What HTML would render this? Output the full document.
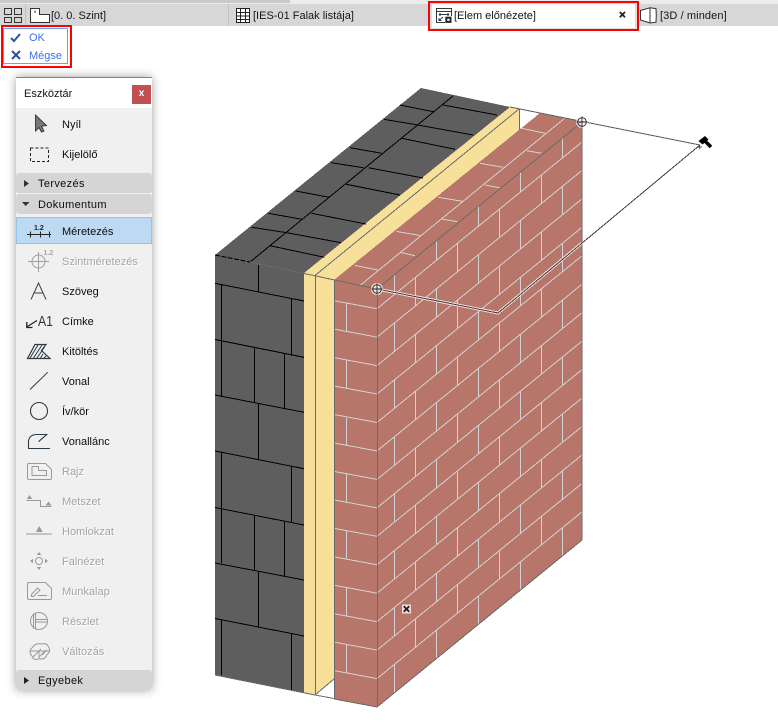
<!DOCTYPE html>
<html><head><meta charset="utf-8"><style>
html,body{margin:0;padding:0;background:#fff}
body{position:relative;width:778px;height:727px;overflow:hidden;font-family:"Liberation Sans",sans-serif;font-size:11px;color:#14141e}
.a{position:absolute;white-space:nowrap;line-height:14px}
.b{position:absolute}
.t{left:62px;color:#0c0c14}
.d{left:62px;color:#a4a4a4;text-shadow:1px 1px 0 #fff}
.h{position:absolute;left:16px;width:136px;height:20px;background:#d5d5d5;border-radius:3px}
.ht{left:38px;letter-spacing:.35px;color:#0c0c14}
svg{position:absolute;left:0;top:0}
</style></head><body>
<div class="b" style="left:0;top:0;width:290px;height:3px;background:#c9c9c9"></div>
<div class="b" style="left:290px;top:0;width:488px;height:3px;background:#ececec"></div>
<div class="b" style="left:0;top:3px;width:778px;height:1px;background:#ececec"></div>
<div class="b" style="left:0;top:4px;width:778px;height:22px;background:#d7d7d7"></div>
<div class="b" style="left:25px;top:4px;width:1px;height:22px;background:#c2c2c2"></div>
<div class="b" style="left:228px;top:4px;width:1px;height:22px;background:#c2c2c2"></div>
<div class="b" style="left:428px;top:1px;width:207px;height:26px;border:2px solid #f00;background:#dedede"></div>
<div class="b" style="left:432px;top:4px;width:203px;height:24px;background:#fff"></div>
<div class="b" style="left:1px;top:25px;width:67px;height:39px;border:2px solid #f00"></div>
<div class="b" style="left:3px;top:28px;width:63px;height:34px;border:1px solid #6f9ff0"></div>
<div class="a" style="left:51px;top:9px">[0. 0. Szint]</div>
<div class="a" style="left:253px;top:9px">[IES-01 Falak listája]</div>
<div class="a" style="left:454px;top:9px">[Elem előnézete]</div>
<div class="a" style="left:660px;top:9px;letter-spacing:.1px">[3D / minden]</div>
<div class="a" style="left:29px;top:31px;color:#3c70f0">OK</div>
<div class="a" style="left:29px;top:49px;color:#3c70f0">Mégse</div>

<div class="b" style="left:16px;top:77px;width:136px;height:613px;background:#f0f0f0;box-shadow:0 0 9px rgba(0,0,0,.38)"></div>
<div class="b" style="left:16px;top:77px;width:136px;height:31px;background:#fff;border-top:1px solid #4a8fd8;box-sizing:border-box"></div>
<div class="a" style="left:24px;top:87px">Eszköztár</div>
<div class="b" style="left:132px;top:85px;width:19px;height:19px;background:#c25050;color:#fff;font-weight:bold;font-size:10px;line-height:18px;text-align:center">x</div>
<div class="h" style="top:173px"></div>
<div class="h" style="top:194px"></div>
<div class="h" style="top:670px"></div>
<div class="b" style="left:16px;top:217px;width:134px;height:25px;background:#bedaf2;border:1px solid #8fc4ef"></div>

<svg width="778" height="727" viewBox="0 0 778 727" fill="none">
<!-- model -->
<g shape-rendering="crispEdges">
<polygon points="215,255 421,88 510,107 304,273 304,693 215,675" fill="#5e5e5e"/>
<polygon points="304,273 510,107 519,109 519,130 334,280 334,679 315,695 304,693" fill="#f6e09a"/>
<polygon points="334,280 540,113 582,122 582,540 377,707 334,699" fill="#b8766b"/>
<g stroke="#000">
<path d="M215 283.3L304 301M215 339.5L304 357.3M215 395L304 412.3M215 451L304 468.7M215 507.5L304 525M215 563L304 580M215 618.5L304 636"/>
<path d="M258.5 265V292M221.5 284.5V341M291.5 298V356M221.5 341V396M254.5 347V403M284.5 354V408M258.5 403V459M221.5 452V508M291.5 467V523M221.5 508V563M254.5 515V570M284.5 522V576M258.5 572V627M221.5 620V675M291.5 634V690"/>
<path d="M250 262L453 96"/>
<path d="M251.7 227.3L286.7 232.7M268.3 213.3L301.7 219.3M295.7 191L329.3 197.3M331 162.7L363.3 167.7M350 147.7L381.7 153.3M384 119.3L418 125M400 105L433.3 111.7"/>
<path d="M270 245.7L324.3 257.3M286.7 232.7L341 242.7M311.7 213.3L366 224M345 184L400 195M368.3 167.7L423 178M401.7 138.3L455 149.3M418 125L473 135M443 105L497 115"/>
<path d="M215 255L250 262" stroke-dasharray="5 1.5"/>
</g>
<g stroke="#d2d2d2">
<path d="M334 300.7L377 308.7M334 329.1L377 337.1M334 357.6L377 365.6M334 386L377 394M334 414.5L377 422.5M334 443L377 451M334 471.4L377 479.4M334 499.9L377 507.9M334 528.3L377 536.3M334 556.8L377 564.8M334 585.2L377 593.2M334 613.7L377 621.7M334 642.1L377 650.1M334 670.6L377 678.6"/>
<path d="M346.5 303.2v28.4M346.5 360.1v28.4M346.5 417v28.4M346.5 473.9v28.4M346.5 530.8v28.4M346.5 587.7v28.4M346.5 644.6v28.4"/>
<path d="M377 308.7L582 142M377 337.15L582 170.45M377 365.6L582 198.9M377 394.05L582 227.35M377 422.5L582 255.8M377 450.95L582 284.25M377 479.4L582 312.7M377 507.85L582 341.15M377 536.3L582 369.6M377 564.75L582 398.05M377 593.2L582 426.5M377 621.65L582 454.95M377 650.1L582 483.4M377 678.55L582 511.85"/>
<path d="M394.5 274.6V294.4M394.5 322.8v28.4M394.5 379.7v28.4M394.5 436.6v28.4M394.5 493.5v28.4M394.5 550.4v28.4M394.5 607.3v28.4M394.5 664.2v28.4"/>
<path d="M415.5 277.3v28.4M415.5 334.2v28.4M415.5 391.1v28.4M415.5 448v28.4M415.5 504.9v28.4M415.5 561.8v28.4M415.5 618.7v28.4"/>
<path d="M436.5 240.5V260.2M436.5 288.7v28.4M436.5 345.6v28.4M436.5 402.5v28.4M436.5 459.4v28.4M436.5 516.3v28.4M436.5 573.2v28.4M436.5 630.1v28.4"/>
<path d="M457.5 243.1v28.4M457.5 300v28.4M457.5 356.9v28.4M457.5 413.8v28.4M457.5 470.7v28.4M457.5 527.6v28.4M457.5 584.5v28.4"/>
<path d="M478.5 206.3V226M478.5 254.5v28.4M478.5 311.4v28.4M478.5 368.3v28.4M478.5 425.2v28.4M478.5 482.1v28.4M478.5 539v28.4M478.5 595.9v28.4"/>
<path d="M499.5 209v28.4M499.5 265.9v28.4M499.5 322.8v28.4M499.5 379.7v28.4M499.5 436.6v28.4M499.5 493.5v28.4M499.5 550.4v28.4"/>
<path d="M520.5 172.2V192M520.5 220.4v28.4M520.5 277.3v28.4M520.5 334.2v28.4M520.5 391.1v28.4M520.5 448v28.4M520.5 504.9v28.4M520.5 561.8v28.4"/>
<path d="M541.5 174.9v28.4M541.5 231.8v28.4M541.5 288.7v28.4M541.5 345.6v28.4M541.5 402.5v28.4M541.5 459.4v28.4M541.5 516.3v28.4"/>
<path d="M562.5 138V157.8M562.5 186.2v28.4M562.5 243.1v28.4M562.5 300v28.4M562.5 356.9v28.4M562.5 413.8v28.4M562.5 470.7v28.4M562.5 527.6v28.4"/>
<path d="M360 285.5L565 118"/>
<path d="M521.7 128.3L545 133.3M480 163.3L503.3 167.3M438.3 197.3L463.3 201.5M396.7 231.5L421.7 235.7M355 265.5L378 270"/>
<path d="M526.7 150.7L541.7 153.3M485 185L499.3 187.7M441.7 219L457.3 221.7M400 252.3L415 255.7"/>
</g>
<g stroke="#6a6a6a">
<path d="M250 262L377 289M377 289L582 122M377.5 289V707M334.5 280V699M582 122V540M377 707L582 540M334 699L377 707M315.5 275V695M315 695L334 698.5M215 675L315 695M315 695L334 679M315 275.5L519 109M519.5 109V130"/>
</g>
<path d="M510 107L700 145" stroke="#666"/>
<path d="M377 289L498 313L582 243" stroke="#ecdedb" stroke-width="3"/>
<path d="M377 289L498 313L700 145" stroke="#4a3a38"/>
</g>
<!-- markers -->
<circle cx="377" cy="289" r="6" fill="#efe0dd"/>
<circle cx="377" cy="289" r="4.3" stroke="#222" stroke-width=".9"/>
<path d="M377 283.5V294.5M371.5 289H382.5" stroke="#222" stroke-width=".9"/>
<circle cx="582" cy="122" r="6" fill="#fff" fill-opacity=".75"/>
<circle cx="582" cy="122" r="4.3" stroke="#222" stroke-width=".9"/>
<path d="M582 116.5V127.5M576.5 122H587.5" stroke="#222" stroke-width=".9"/>
<rect x="402" y="604.5" width="9" height="9" fill="#ecdcd9"/>
<path d="M403.8 606.3L409.2 611.7M409.2 606.3L403.8 611.7" stroke="#2a1a1a" stroke-width="1.8"/>
<path d="M698.500 141L705 136L708.500 139.500L702.500 144.500Z" fill="#000"/>
<path d="M704 140L711 147" stroke="#000" stroke-width="3.500"/>
<path d="M697.500 147H702M699.700 144.800V149.200" stroke="#333" stroke-width=".8"/>

<!-- tab icons -->
<g stroke="#333" stroke-width="1">
<rect x="4.5" y="8.5" width="7" height="6"/><rect x="14.5" y="8.5" width="7" height="6"/>
<rect x="4.5" y="17.5" width="7" height="5"/><rect x="14.5" y="17.5" width="7" height="5"/>
<path d="M30.5 8.5H39.5V14.5H49.5V22.5H30.5Z" fill="#fff"/>
<path d="M35 10.5V13" stroke-width="1"/>
</g>
<g stroke="#222" stroke-width="1">
<rect x="236.5" y="8.5" width="13" height="14" fill="#fff"/>
<path d="M240.5 8.5V22.5M245.5 8.5V22.5M236.5 12.5H249.5M236.5 16H249.5M236.5 19.5H249.5"/>
</g>
<g stroke="#2e3a44" stroke-width="1">
<path d="M445 22.5H436.5V8.5H451.5V16"/>
<path d="M436.5 11.5H451.5"/>
<path d="M439 14.5H449M439 14.5L440.5 13.3M439 14.5L440.5 15.7M449 14.5L447.5 13.3M449 14.5L447.5 15.7"/>
<path d="M439 20.5L443 17M439 18V20.5H441.5"/>
</g>
<rect x="445.3" y="16.7" width="6.2" height="6.2" fill="#1e2a34"/>
<rect x="447.3" y="18.7" width="2.2" height="2.2" fill="#fff"/>
<path d="M619.8 12L625 17.2M625 12L619.8 17.2" stroke="#222" stroke-width="1.8"/>
<path d="M640.5 10.5L650 7.8L656 8.6Q656.6 15 656 22.2L650 23L640.5 20Z" fill="#fff" stroke="#333"/>
<path d="M650 7.8V23" stroke="#333"/>
<path d="M11 38L14 41L20 34" stroke="#2f4f9f" stroke-width="2"/>
<path d="M12 51L20 59M20 51L12 59" stroke="#2f4f9f" stroke-width="2"/>

<!-- header triangles -->
<path d="M24 180L29 183.5L24 187Z" fill="#333"/>
<path d="M22 202H29.5L25.7 206Z" fill="#333"/>
<path d="M24 677L29 680.5L24 684Z" fill="#222"/>

<!-- tool icons -->
<path d="M35.5 115V131L39 127.5L41.5 132L44 131L41.5 126.2L46.5 125.5Z" fill="#777" stroke="#333" stroke-width=".9"/>
<rect x="30.5" y="148" width="18" height="13.5" stroke="#222" stroke-dasharray="3 2"/>
<g stroke="#222" stroke-width="1"><path d="M27 234.5H51M30.5 231.5V237.5M40.5 231.5V237.5M49.5 231.5V237.5"/></g>
<text x="34" y="230" font-family="Liberation Sans" font-size="7" font-weight="bold" fill="#222">1.2</text>
<g stroke="#a0a0a0"><circle cx="38.5" cy="261.5" r="6.5"/><path d="M38.5 252V272M28 261.5H49"/></g>
<text x="43.500" y="255" font-family="Liberation Sans" font-size="7" font-weight="bold" fill="#a8a8a8">1.2</text>
<path d="M31 299.5L38.5 283L46 299.5M34 293H43" stroke="#3a444c" stroke-width="1"/>
<path d="M37 320.500L27.500 326.500M26.800 322V327.500H32.500" stroke="#222" stroke-width="1.300"/>
<text x="38" y="326" font-family="Liberation Sans" font-size="15" fill="#333" textLength="15" lengthAdjust="spacingAndGlyphs">A1</text>
<path d="M27.500 358.500L35 344.500H46L41.500 350.500L50 358.500Z" stroke="#2e3a44" stroke-width="1.200"/>
<path d="M30 358L38 345M33.500 358L42 345M37 358L44.500 347M40.500 358L43 354M44 358L46 356" stroke="#2e3a44" stroke-width="1"/>
<path d="M30 389.500L47.700 372.300" stroke="#2e3a44" stroke-width="1"/>
<circle cx="39" cy="411" r="8.500" stroke="#2e3a44" stroke-width="1.100"/>
<path d="M50 448.500H28.500V441Q29.500 434.500 37 434.500H46.700L38.500 441.700" stroke="#2e3a44" stroke-width="1.100"/>
<g stroke="#999" stroke-width="1">
<path d="M28.500 463.500H45.500L51.500 469.500V478Q51.500 479.500 50 479.500H29Q27.500 479.500 27.500 478V465Q27.500 463.500 28.500 463.500Z"/>
<path d="M32 466.500H38.500V470.500H46.500V475.500H32Z"/>
<path d="M26.500 500.500H40.500V506.500H51.500"/>
<path d="M26 534H52"/>
<circle cx="39" cy="561" r="3.500"/>
<path d="M28.500 582.500H45.500L51.500 588.500V598Q51.500 599.500 50 599.500H29Q27.500 599.500 27.500 598V584Q27.500 582.500 28.500 582.500Z"/>
<path d="M31.500 594.500L37.500 588L40 590L33.500 596.500L31.500 596.500ZM38 595.500H47"/>
<circle cx="39" cy="621" r="8.500"/>
<path d="M33.500 613.500V628.500M35.500 612.800V629.500M35.500 619.500H47.500M35.500 622H47"/>
<path d="M33 647Q35 642.700 41 644Q47 642.500 48.500 647Q51.500 651 47 654.500Q45 660.500 39 658.500Q34 661.500 32 656Q27.500 651 33 647Z"/>
<path d="M30 651H49M33 657L39 651V658M39 657L45 651M36 654L41 649M42 655L47 650" stroke-width=".9"/>
</g>
<g fill="#999">
<path d="M29.500 495L26.800 499H32.200Z"/><path d="M48.500 501.500L45.500 505.500H51.500Z"/>
<path d="M39.300 526L36 532H42.700Z"/>
<path d="M39 552L36.800 555H41.200Z"/><path d="M39 570L36.800 567H41.200Z"/>
<path d="M30 561L33 558.800V563.200Z"/><path d="M48 561L45 558.800V563.200Z"/>
</g>
</svg>

<div class="a ht" style="top:177px">Tervezés</div>
<div class="a ht" style="top:198px">Dokumentum</div>
<div class="a ht" style="top:674px">Egyebek</div>
<div class="a t" style="top:118px">Nyíl</div>
<div class="a t" style="top:148px">Kijelölő</div>
<div class="a t" style="top:225px">Méretezés</div>
<div class="a d" style="top:255px">Szintméretezés</div>
<div class="a t" style="top:285px">Szöveg</div>
<div class="a t" style="top:315px">Címke</div>
<div class="a t" style="top:345px">Kitöltés</div>
<div class="a t" style="top:375px">Vonal</div>
<div class="a t" style="top:405px">Ív/kör</div>
<div class="a t" style="top:435px">Vonallánc</div>
<div class="a d" style="top:465px">Rajz</div>
<div class="a d" style="top:495px">Metszet</div>
<div class="a d" style="top:525px">Homlokzat</div>
<div class="a d" style="top:555px">Falnézet</div>
<div class="a d" style="top:585px">Munkalap</div>
<div class="a d" style="top:615px">Részlet</div>
<div class="a d" style="top:645px">Változás</div>
</body></html>
